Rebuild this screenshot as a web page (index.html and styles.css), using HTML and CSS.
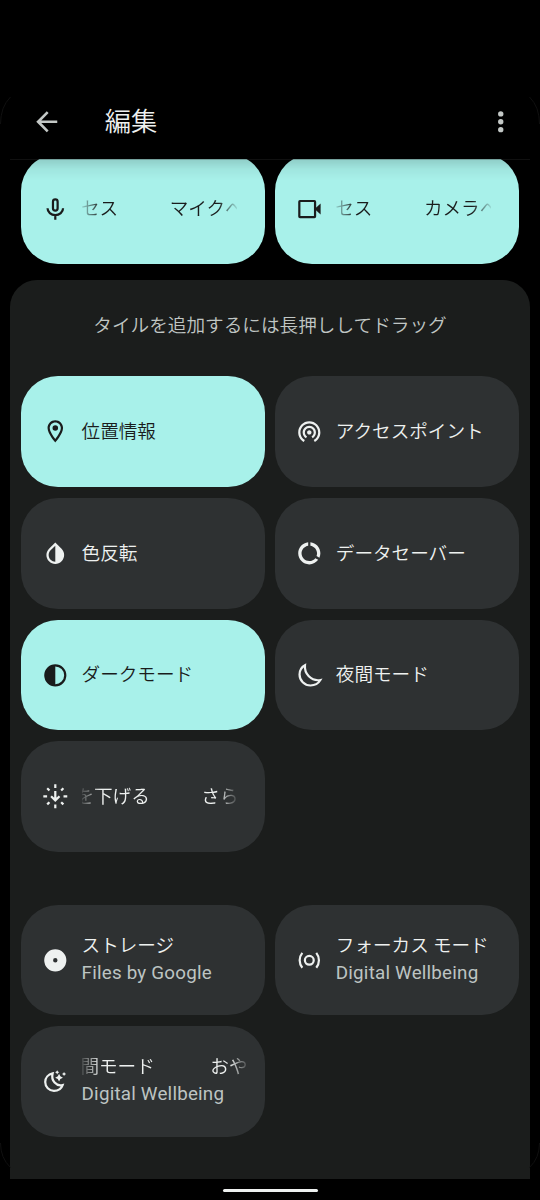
FILE: index.html
```html
<!DOCTYPE html>
<html lang="ja">
<head>
<meta charset="utf-8">
<title>編集</title>
<link rel="stylesheet" href="styles.css">
</head>
<body>
<div class="screen">
  <svg class="frame" viewBox="0 0 540 1200" fill="none" stroke="#101010"><path d="M10.5 97Q.5 107 .5 124M529.500 97Q539.500 107 539.500 124M.5 1143Q.5 1158 10.500 1167.500M539.500 1143Q539.500 1158 529.500 1167.500"/></svg>
  <header class="bar">
    <svg class="nav-icon" viewBox="0 0 24 24"><path d="M20 11H7.830l5.590-5.590L12 4l-8 8 8 8 1.410-1.410L7.830 13H20v-2z"/></svg>
    <h1 class="title">編集</h1>
    <svg class="nav-icon" viewBox="0 0 24 24"><circle cx="12" cy="6" r="2.050"/><circle cx="12" cy="12" r="2.050"/><circle cx="12" cy="18" r="2.050"/></svg>
  </header>

  <section class="current">
    <div class="grid">
      <div class="tile on">
        <svg class="icon" viewBox="0 0 24 24"><g class="line"><rect x="9.900" y="3" width="4.200" height="10.200" rx="2.100"/><path d="M5 11a7 6.300 0 0 0 14 0M12 17v4.500"/></g></svg>
        <div class="marquee"><span>セス</span><span>マイクへ</span></div>
      </div>
      <div class="tile on">
        <svg class="icon" viewBox="0 0 24 24"><rect class="line" x="3" y="4.500" width="14.200" height="14.500" rx=".6"/><path d="M17.500 11 22.200 6.700v10.100l-4.700-4.300z"/></svg>
        <div class="marquee"><span>セス</span><span>カメラへ</span></div>
      </div>
    </div>
  </section>

  <main class="panel">
    <p class="hint">タイルを追加するには長押ししてドラッグ</p>
    <div class="grid">
      <div class="tile on">
        <svg class="icon" viewBox="0 0 24 24"><path d="M12 2C8.130 2 5 5.130 5 9c0 5.250 7 13 7 13s7-7.750 7-13c0-3.870-3.130-7-7-7zM7 9c0-2.760 2.240-5 5-5s5 2.240 5 5c0 2.880-2.880 7.190-5 9.880C9.920 16.210 7 11.850 7 9z"/><circle cx="12" cy="9" r="2.500"/></svg>
        <span class="label">位置情報</span>
      </div>
      <div class="tile">
        <svg class="icon" viewBox="0 0 24 24"><path d="M12 11c-1.100 0-2 .9-2 2s.9 2 2 2 2-.9 2-2-.9-2-2-2zm6 2c0-3.310-2.690-6-6-6s-6 2.690-6 6c0 2.220 1.210 4.150 3 5.190l1-1.740c-1.190-.7-2-1.970-2-3.450 0-2.210 1.790-4 4-4s4 1.790 4 4c0 1.480-.81 2.750-2 3.450l1 1.740c1.790-1.040 3-2.970 3-5.190zM12 3C6.480 3 2 7.480 2 13c0 3.700 2.010 6.920 4.990 8.650l1-1.730C5.610 18.530 4 15.960 4 13c0-4.420 3.580-8 8-8s8 3.580 8 8c0 2.960-1.610 5.530-4 6.920l1 1.730c2.990-1.730 5-4.950 5-8.650 0-5.520-4.480-10-10-10z"/></svg>
        <span class="label">アクセスポイント</span>
      </div>
      <div class="tile">
        <svg class="icon" viewBox="0 0 24 24"><path d="M17.660 7.930L12 2.270 6.340 7.930c-3.120 3.120-3.120 8.190 0 11.310C7.900 20.800 9.950 21.580 12 21.580s4.100-.78 5.660-2.340c3.120-3.120 3.120-8.190 0-11.310zM12 19.590c-1.600 0-3.110-.62-4.240-1.760C6.620 16.690 6 15.190 6 13.590s.62-3.110 1.760-4.240L12 5.100v14.490z"/></svg>
        <span class="label">色反転</span>
      </div>
      <div class="tile">
        <svg class="icon" viewBox="0 0 24 24"><path d="M13 2.050v3.030c3.390.49 6 3.390 6 6.920 0 .9-.18 1.750-.48 2.540l2.600 1.530c.56-1.240.88-2.620.88-4.070 0-5.180-3.950-9.450-9-9.950zM12 19c-3.870 0-7-3.130-7-7 0-3.530 2.610-6.430 6-6.920V2.050c-5.060.5-9 4.760-9 9.950 0 5.520 4.470 10 9.990 10 3.310 0 6.240-1.610 8.060-4.090l-2.600-1.530C16.170 17.980 14.210 19 12 19z"/></svg>
        <span class="label">データセーバー</span>
      </div>
      <div class="tile on">
        <svg class="icon" viewBox="0 0 24 24"><circle class="line" cx="12" cy="12" r="9"/><path d="M12 3a9 9 0 0 0 0 18z"/></svg>
        <span class="label">ダークモード</span>
      </div>
      <div class="tile">
        <svg class="icon" viewBox="0 0 24 24"><path class="line" d="M8.100 2.900C5 4.600 3.200 7.800 3.200 11.200c0 5.500 4.400 10 9.900 10 4 0 7.200-2 8.900-4.900C13.500 17.600 7.300 10.500 8.100 2.900z"/></svg>
        <span class="label">夜間モード</span>
      </div>
      <div class="tile">
        <svg class="icon" viewBox="0 0 24 24"><path class="line" d="M12 1.200v3.400M12 19.400v3.400M1.200 12h3.400M19.400 12h3.400M4.700 4.700l2 2M17.300 17.300l2 2M19.300 4.700l-2 2M6.700 17.300l-2 2M12 7.300v8M8.200 11.900l3.800 3.800 3.800-3.800"/></svg>
        <div class="marquee shifted"><span>を下げる</span><span>さら</span></div>
      </div>
    </div>

    <div class="grid apps">
      <div class="tile">
        <svg class="icon" viewBox="0 0 24 24"><path fill-rule="evenodd" d="M12 2a10 10 0 1 0 0 20 10 10 0 0 0 0-20zm0 8a2 2 0 1 1 0 4 2 2 0 0 1 0-4z"/></svg>
        <div class="text"><span class="label">ストレージ</span><span class="sub">Files by Google</span></div>
      </div>
      <div class="tile">
        <svg class="icon" viewBox="0 0 24 24"><g class="line"><circle cx="12" cy="12" r="4"/><path d="M5.700 5.300c-3.200 4-3.200 9.400 0 13.400M18.300 5.300c3.200 4 3.200 9.400 0 13.400"/></g></svg>
        <div class="text"><span class="label">フォーカス モード</span><span class="sub">Digital Wellbeing</span></div>
      </div>
      <div class="tile">
        <svg class="icon" viewBox="0 0 24 24"><path class="line" d="M9.600 4.900C5.700 5.700 2.900 8.900 2.900 12.700c0 4.400 3.500 7.900 7.900 7.900 3.700 0 6.700-2 7.800-5.200-5.600 1.400-10.700-4-9-10.500z"/><path d="M15.400 5.200l1.150 2.350L18.900 8.700l-2.350 1.150-1.150 2.350-1.150-2.350L11.900 8.700l2.350-1.150zM13.700 2l.7 1.200 1.200.7-1.200.7-.7 1.200-.7-1.200-1.200-.7 1.200-.7zM19.900 3.500l.7 1.200 1.200.7-1.200.7-.7 1.200-.7-1.200-1.200-.7 1.200-.7z"/></svg>
        <div class="text"><div class="marquee long"><span>間モード</span><span>おや</span></div><span class="sub">Digital Wellbeing</span></div>
      </div>
    </div>
  </main>
  <div class="gesture"></div>
</div>
</body>
</html>
```
FILE: styles.css
```css
* { box-sizing: border-box; }

body {
  margin: 0;
  background: #000;
  font-family: "Noto Sans CJK JP", sans-serif;
}

.screen {
  position: relative;
  display: flex;
  flex-direction: column;
  width: 540px;
  height: 1200px;
  padding: 84px 10.400px 0;
  overflow: hidden;
  color: #eef1f0;
}

.frame {
  position: absolute;
  inset: 0;
  width: 540px;
  height: 1200px;
}

.bar {
  display: flex;
  align-items: center;
  flex: none;
  height: 75px;
  padding: 0 13.300px 0 20.600px;
}

.nav-icon {
  width: 31.500px;
  height: 31.500px;
  fill: #c3c8c6;
}

.title {
  flex: 1;
  margin: 0 0 4px 42.300px;
  font-size: 26.300px;
  line-height: 40px;
  font-weight: 350;
}

/* The scrolled list of active tiles slides under the app bar. */
.current {
  position: relative;
  display: flex;
  flex-direction: column;
  justify-content: flex-end;
  flex: none;
  height: 105.400px;
  padding: 0 10.600px;
  overflow: hidden;
}

.current::after {
  content: "";
  position: absolute;
  inset: 0 0 auto;
  height: 20px;
  border-top: 1px solid rgba(40, 40, 40, .4);
  background: linear-gradient(rgba(0, 0, 0, .14), rgba(0, 0, 0, .05) 45%, transparent);
}

.panel {
  flex: none;
  height: 898.500px;
  margin-top: 16.100px;
  padding: 0 10.600px;
  border-radius: 27px 27px 0 0;
  background: #1b1d1c;
}

.hint {
  height: 95.900px;
  margin: 0;
  padding-top: 29px;
  font-size: 18.640px;
  line-height: 30px;
  font-weight: 350;
  text-align: center;
  color: #c0c6c4;
}

.grid {
  display: grid;
  grid-template-columns: 1fr 1fr;
  grid-auto-rows: 110.600px;
  gap: 11px 10.400px;
}

.apps { margin-top: 52.800px; }

.tile {
  display: flex;
  align-items: center;
  min-width: 0;
  padding: 0 18px 0 21px;
  border-radius: 37px;
  background: #2e3132;
}

.tile.on {
  background: #a8f1ea;
  color: #1a1c1c;
}

.icon {
  flex: none;
  width: 26.600px;
  height: 26.600px;
  margin-right: 13px;
  fill: currentColor;
}

.line {
  fill: none;
  stroke: currentColor;
  stroke-width: 2;
}

.label,
.marquee {
  font-size: 18.600px;
  line-height: 28px;
  font-weight: 350;
  white-space: nowrap;
}

.tile > .label,
.tile > .marquee { margin-bottom: 3.400px; }

/* Scrolling labels fade out at both ends. */
.marquee {
  display: flex;
  gap: 51.500px;
  width: 155px;
  overflow: hidden;
  -webkit-mask-image: linear-gradient(90deg, rgba(0, 0, 0, .15), #000 19px, #000 calc(100% - 19px), rgba(0, 0, 0, .1));
  mask-image: linear-gradient(90deg, rgba(0, 0, 0, .15), #000 19px, #000 calc(100% - 19px), rgba(0, 0, 0, .1));
}

.marquee span { flex: none; }

.marquee span:first-child { margin-left: -.6px; }

.shifted span:first-child { margin-left: -6.200px; }

.long {
  width: 166px;
  gap: 55.500px;
}

.long span:first-child { margin-left: -1.200px; }

.text {
  display: flex;
  flex-direction: column;
  min-width: 0;
  margin-bottom: 3px;
}

.sub {
  margin-top: 1px;
  font-family: Roboto, "Noto Sans", sans-serif;
  font-size: 18.800px;
  line-height: 28px;
  letter-spacing: .21px;
  white-space: nowrap;
  color: #bdc4c2;
}

.gesture {
  flex: none;
  width: 95px;
  height: 3.200px;
  margin: 10px auto 0;
  border-radius: 2px;
  background: #eef1f0;
}
```
